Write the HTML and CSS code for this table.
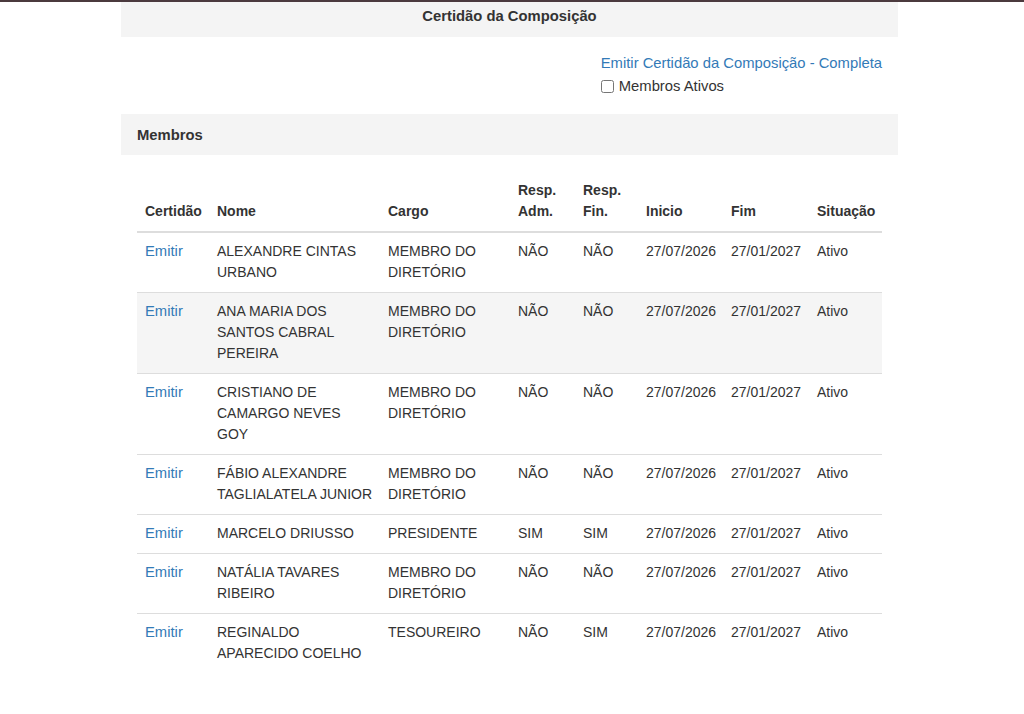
FILE: index.html
```html
<!DOCTYPE html>
<html lang="pt-BR">
<head>
<meta charset="utf-8">
<title>Certidão da Composição</title>
<link rel="stylesheet" href="styles.css">
</head>
<body>
<div class="topbar"></div>
<div class="container">
  <div class="panel-title">Certidão da Composição</div>
  <div class="actions">
    <div class="actions-inner">
      <a class="link" href="#">Emitir Certidão da Composição - Completa</a>
      <label class="check"><input type="checkbox"> Membros Ativos</label>
    </div>
  </div>
  <div class="section-title">Membros</div>
  <div class="table-wrap">
    <table class="members">
      <colgroup>
        <col class="c1"><col class="c2"><col class="c3"><col class="c4"><col class="c5"><col class="c6"><col class="c7"><col class="c8">
      </colgroup>
      <thead>
        <tr>
          <th>Certidão</th><th>Nome</th><th>Cargo</th><th>Resp.<br>Adm.</th><th>Resp.<br>Fin.</th><th>Inicio</th><th>Fim</th><th>Situação</th>
        </tr>
      </thead>
      <tbody>
        <tr><td><a class="link" href="#">Emitir</a></td><td class="name">ALEXANDRE CINTAS URBANO</td><td>MEMBRO DO DIRETÓRIO</td><td>NÃO</td><td>NÃO</td><td>27/07/2026</td><td>27/01/2027</td><td>Ativo</td></tr>
        <tr class="hl"><td><a class="link" href="#">Emitir</a></td><td class="name">ANA MARIA DOS SANTOS CABRAL PEREIRA</td><td>MEMBRO DO DIRETÓRIO</td><td>NÃO</td><td>NÃO</td><td>27/07/2026</td><td>27/01/2027</td><td>Ativo</td></tr>
        <tr><td><a class="link" href="#">Emitir</a></td><td class="name">CRISTIANO DE CAMARGO NEVES GOY</td><td>MEMBRO DO DIRETÓRIO</td><td>NÃO</td><td>NÃO</td><td>27/07/2026</td><td>27/01/2027</td><td>Ativo</td></tr>
        <tr><td><a class="link" href="#">Emitir</a></td><td class="name">FÁBIO ALEXANDRE TAGLIALATELA JUNIOR</td><td>MEMBRO DO DIRETÓRIO</td><td>NÃO</td><td>NÃO</td><td>27/07/2026</td><td>27/01/2027</td><td>Ativo</td></tr>
        <tr><td><a class="link" href="#">Emitir</a></td><td class="name">MARCELO DRIUSSO</td><td>PRESIDENTE</td><td>SIM</td><td>SIM</td><td>27/07/2026</td><td>27/01/2027</td><td>Ativo</td></tr>
        <tr><td><a class="link" href="#">Emitir</a></td><td class="name">NATÁLIA TAVARES RIBEIRO</td><td>MEMBRO DO DIRETÓRIO</td><td>NÃO</td><td>NÃO</td><td>27/07/2026</td><td>27/01/2027</td><td>Ativo</td></tr>
        <tr><td><a class="link" href="#">Emitir</a></td><td class="name">REGINALDO APARECIDO COELHO</td><td>TESOUREIRO</td><td>NÃO</td><td>SIM</td><td>27/07/2026</td><td>27/01/2027</td><td>Ativo</td></tr>
      </tbody>
    </table>
  </div>
</div>
</body>
</html>
```

FILE: styles.css
```css
html, body {
  margin: 0;
  padding: 0;
  background: #ffffff;
}
body {
  font-family: "Liberation Sans", Arial, Helvetica, sans-serif;
  font-size: 14px;
  line-height: 20px;
  color: #333333;
  font-kerning: normal;
}
.topbar {
  height: 2px;
  background: #4b3a3e;
}
.container {
  margin-left: 121px;
  width: 777px;
}
.panel-title {
  background: #f4f4f4;
  text-align: center;
  font-weight: bold;
  font-size: 14.8px;
  padding: 4px 0 11px;
}
.actions {
  display: flex;
  justify-content: flex-end;
  padding: 16px 16px 0;
  font-size: 14.8px;
}
.actions-inner {
  display: flex;
  flex-direction: column;
  align-items: flex-start;
}
.link {
  color: #337ab7;
  text-decoration: none;
}
.actions .link {
  margin-bottom: 3px;
}
.check {
  display: flex;
  align-items: center;
  height: 20px;
}
.check input {
  margin: 0 5px 0 0;
  width: 13px;
  height: 13px;
}
.section-title {
  margin-top: 18px;
  background: #f4f4f4;
  font-weight: bold;
  font-size: 14.8px;
  padding: 11px 16px 10px;
}
.table-wrap {
  padding: 18px 16px 0;
}
.members {
  width: 745px;
  border-collapse: collapse;
  table-layout: fixed;
}
.c1 { width: 72px; }
.c2 { width: 171px; }
.c3 { width: 130px; }
.c4 { width: 65px; }
.c5 { width: 63px; }
.c6 { width: 85px; }
.c7 { width: 86px; }
.c8 { width: 73px; }
.members th {
  text-align: left;
  vertical-align: bottom;
  font-weight: bold;
  line-height: 21px;
  padding: 7px 8px 9px;
  border-bottom: 2px solid #dddddd;
}
.members td {
  vertical-align: top;
  line-height: 21px;
  padding: 8px 8px 9px;
  border-top: 1px solid #dddddd;
}
.members td .link {
  font-size: 14.8px;
}
.members td.name {
  padding-right: 6px;
}
.members tbody tr:first-child td {
  border-top: 0;
}
.members tr.hl td {
  background: #f5f5f5;
}
```
